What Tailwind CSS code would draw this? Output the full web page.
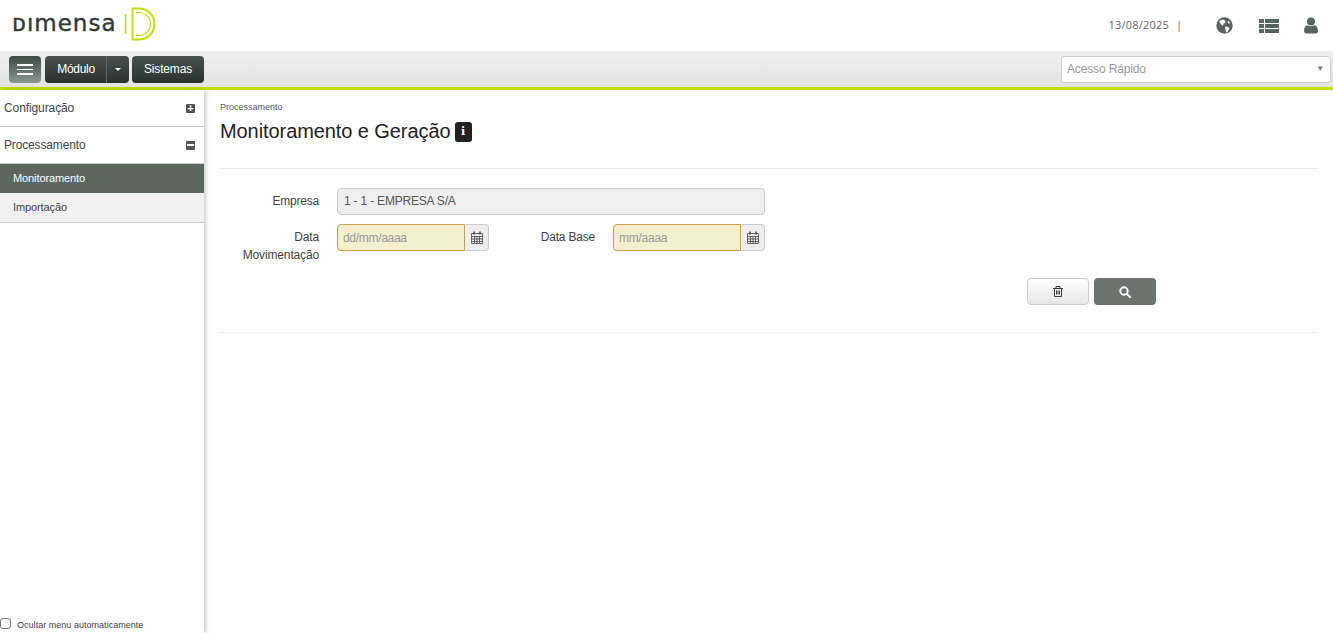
<!DOCTYPE html>
<html lang="pt-BR">
  <head>
    <meta charset="UTF-8" />
    <meta name="viewport" content="width=device-width, initial-scale=1.0" />
    <title>Monitoramento e Geração</title>
    <script src="https://cdn.jsdelivr.net/npm/@tailwindcss/browser@4"></script>
  </head>
  <body class="h-[633px] overflow-hidden bg-white font-['Liberation_Sans',Arial,sans-serif] text-[#333]">
    <!-- top header -->
    <header class="flex h-[51px] items-center justify-between bg-white">
      <div class="flex items-center pl-[12px]">
        <span class="mb-[5px] w-[104px] font-['DejaVu_Sans',sans-serif] text-[23px] leading-none tracking-[1px] text-[#2f3a36] [-webkit-text-stroke:0.4px_#2f3a36]">ᴅımensa</span>
        <svg class="ml-[8px] mb-[3px]" width="33" height="34" viewBox="0 0 33 34" fill="none" stroke="#c3e000">
          <path d="M1.5 7v20" stroke-width="1.6" />
          <path d="M8.5 1.5h6.5c8.5 0 15.5 7 15.5 15.5s-7 15.5-15.5 15.500h-6.500z" stroke-width="2" />
          <path d="M12 5.500h3c6.300 0 11.500 5.200 11.500 11.500S21.300 28.500 15 28.500h-3" stroke-width="1.200" />
        </svg>
      </div>
      <div class="flex items-center pr-[15px]">
        <span class="font-['Open_Sans',sans-serif] text-[11px] tracking-[0.2px] text-[#666666]">13/08/2025</span>
        <span class="ml-[7px] font-['Open_Sans',sans-serif] text-[11px] text-[#4a6a80]">|</span>
        <svg class="ml-[34px]" width="17" height="17" viewBox="0 0 17 17">
          <circle cx="8.500" cy="8.500" r="8.200" fill="#56665b" />
          <path d="M3 4.500c1.500-1.500 3-2 4.500-1.800L9.500 4 9 6 7.500 6.500 7 8.500 5.500 8 4.500 6.500zM9 9.500l3 .5 1.500 1.500-2 3.500-1.500.5-.5-3zM12 3.500l2 2-1 1.500-1.500-1.500z" fill="#fff" />
        </svg>
        <svg class="ml-[26px]" width="20" height="16" viewBox="0 0 20 16" fill="#56665b">
          <path d="M0 1h5v4H0zM6 1h14v4H6zM0 6h5v4H0zM6 6h14v4H6zM0 11h5v4H0zM6 11h14v4H6z" />
        </svg>
        <svg class="ml-[25px]" width="14" height="17" viewBox="0 0 14 17" fill="#56665b">
          <circle cx="7" cy="4.500" r="4" />
          <path d="M0 14c0-3.500 1.500-5.500 3.500-5.800 2 1.400 5 1.400 7 0C12.500 8.500 14 10.500 14 14c0 1.500-1 2.500-2.500 2.500h-9C1 16.500 0 15.500 0 14z" />
        </svg>
      </div>
    </header>

    <!-- nav bar -->
    <nav class="flex h-[39px] items-start justify-between border-b-[3px] border-[#c3e000] bg-gradient-to-b from-[#eeeeee] to-[#e3e3e3] pt-[5px]">
      <div class="flex items-center pl-[9px]">
        <button class="flex h-[27px] w-[32px] flex-col items-center justify-center gap-[3px] rounded-[4px] bg-gradient-to-b from-[#3c4a43] to-[#8a9a90]">
          <span class="h-[1.5px] w-[16px] bg-white"></span>
          <span class="h-[1.5px] w-[16px] bg-white"></span>
          <span class="h-[1.5px] w-[16px] bg-white"></span>
        </button>
        <div class="ml-[4px] flex h-[27px] w-[84px] rounded-[4px] bg-gradient-to-b from-[#48534e] to-[#29322e] text-[12px] tracking-[-0.3px] text-white">
          <span class="flex w-[62px] items-center justify-center border-r border-[#5f6a65] pb-[1px] pl-[1px]">Módulo</span>
          <span class="flex flex-1 items-center justify-center"><span class="border-x-[3px] border-t-[3px] border-x-transparent border-t-white"></span></span>
        </div>
        <button class="ml-[3px] h-[27px] w-[72px] rounded-[4px] bg-gradient-to-b from-[#48534e] to-[#29322e] pb-[1px] text-[12px] tracking-[-0.15px] text-white">Sistemas</button>
      </div>
      <div class="mr-[2px] flex h-[27px] w-[270px] items-center justify-between rounded-[3px] border border-[#cccccc] bg-white pb-[1px] pl-[5px] pr-[6px] text-[12px] tracking-[-0.15px] text-[#999]">
        <span>Acesso Rápido</span>
        <span class="text-[8px] text-[#777]">▼</span>
      </div>
    </nav>

    <div class="flex h-[543px]">
      <!-- sidebar -->
      <aside class="flex w-[204px] shrink-0 flex-col justify-between bg-white shadow-[2px_0_4px_rgba(0,0,0,0.2)]">
        <div>
          <div class="flex h-[37px] items-center justify-between border-b border-[#cccccc] pl-[4px] pr-[9px] text-[12px] tracking-[-0.1px] text-[#444]">
            <span>Configuração</span>
            <span class="flex h-[9px] w-[9px] items-center justify-center rounded-[1px] bg-[#555] text-[11px] font-bold leading-none text-white">+</span>
          </div>
          <div class="flex h-[37px] items-center justify-between border-b border-[#cccccc] pl-[4px] pr-[9px] text-[12px] tracking-[-0.15px] text-[#444]">
            <span>Processamento</span>
            <span class="flex h-[9px] w-[9px] items-center justify-center rounded-[1px] bg-[#555]"><span class="h-[2px] w-[7px] bg-white"></span></span>
          </div>
          <div class="flex h-[29px] items-center bg-[#5a685e] pl-[13px] text-[11px] tracking-[-0.1px] text-white">Monitoramento</div>
          <div class="flex h-[30px] items-center border-b border-[#cccccc] bg-[#f1f1f1] pl-[13px] text-[11px] tracking-[-0.1px] text-[#444]">Importação</div>
        </div>
        <label class="flex h-[18px] items-center pb-[2px] text-[9px] tracking-[0.03px] text-[#444]">
          <span class="h-[11px] w-[11px] rounded-[3px] border border-[#777] bg-white"></span>
          <span class="ml-[6px] mt-[6px]">Ocultar menu automaticamente</span>
        </label>
      </aside>

      <!-- content -->
      <main class="flex-1 pl-[16px] pr-[15px]">
        <p class="pt-[11px] text-[9px] leading-[12px] text-[#555]">Processamento</p>
        <div class="mt-[6px] flex h-[24px] items-center gap-[4px]">
          <h1 class="text-[20px] leading-none tracking-[-0.08px] text-[#222]">Monitoramento e Geração</h1>
          <span class="mt-[2px] flex h-[20px] w-[17px] items-center justify-center rounded-[3px] bg-[#222] font-['DejaVu_Serif',serif] text-[11px] font-bold text-white">i</span>
        </div>
        <hr class="mt-[25px] border-[#eeeeee]" />

        <div class="mt-[19px] flex items-center">
          <label class="w-[99px] pb-[1px] text-right text-[12px] tracking-[-0.2px] text-[#444]">Empresa</label>
          <div class="ml-[18px] flex h-[27px] w-[428px] items-center rounded-[4px] border border-[#cccccc] bg-[#eeeeee] pb-[1px] pl-[6px] text-[12px] tracking-[-0.2px] text-[#555]">1 - 1 - EMPRESA S/A</div>
        </div>

        <div class="mt-[9px] flex h-[40px] items-start">
          <label class="w-[99px] pt-[4px] text-right text-[12px] leading-[18px] tracking-[-0.15px] text-[#444]">Data Movimentação</label>
          <div class="ml-[18px] flex h-[27px] w-[152px]">
            <div class="flex w-[128px] items-center rounded-l-[4px] border border-[#c9a04e] bg-[#f5efd0] pl-[5px] text-[12px] tracking-[-0.3px] text-[#999]">dd/mm/aaaa</div>
            <div class="flex flex-1 items-center justify-center rounded-r-[4px] border border-l-0 border-[#cccccc] bg-[#eeeeee]">
              <svg width="12" height="13" viewBox="0 0 12 13" fill="none" stroke="#444"><path d="M.5 2.500h11v10H.5zM.5 5.500h11M.5 8h11M.5 10.500h11M3.500 5.500v7M6 5.500v7M8.500 5.500v7" stroke-width="0.8" /><path d="M3 .5v3M9 .5v3" stroke-width="1.500" /></svg>
            </div>
          </div>
          <label class="w-[106px] pt-[4px] text-right text-[12px] leading-[18px] tracking-[-0.2px] text-[#444]">Data Base</label>
          <div class="ml-[18px] flex h-[27px] w-[152px]">
            <div class="flex w-[128px] items-center rounded-l-[4px] border border-[#c9a04e] bg-[#f5efd0] pl-[5px] text-[12px] tracking-[-0.25px] text-[#999]">mm/aaaa</div>
            <div class="flex flex-1 items-center justify-center rounded-r-[4px] border border-l-0 border-[#cccccc] bg-[#eeeeee]">
              <svg width="12" height="13" viewBox="0 0 12 13" fill="none" stroke="#444"><path d="M.5 2.500h11v10H.5zM.5 5.500h11M.5 8h11M.5 10.500h11M3.500 5.500v7M6 5.500v7M8.500 5.500v7" stroke-width="0.8" /><path d="M3 .5v3M9 .5v3" stroke-width="1.500" /></svg>
            </div>
          </div>
        </div>

        <div class="mt-[14px] ml-[807px] flex gap-[5px]">
          <button class="flex h-[27px] w-[62px] items-center justify-center rounded-[4px] border border-[#cccccc] bg-gradient-to-b from-[#ffffff] to-[#e6e6e6]">
            <svg width="10" height="11" viewBox="0 0 10 11" fill="none" stroke="#3a3f4a"><path d="M0 2.500h10M3 2.500V.5h4v2M1.500 2.500v8h7v-8M3.500 4.500v4M5 4.500v4M6.500 4.500v4" /></svg>
          </button>
          <button class="flex h-[27px] w-[62px] items-center justify-center rounded-[4px] bg-[#6d736f]">
            <svg width="12" height="12" viewBox="0 0 12 12" fill="none" stroke="#fff" stroke-width="2"><circle cx="5" cy="5" r="3.700" /><path d="M8 8l3.200 3.200" stroke-linecap="round" /></svg>
          </button>
        </div>
        <hr class="mt-[27px] border-[#eeeeee]" />
      </main>
    </div>
  </body>
</html>
